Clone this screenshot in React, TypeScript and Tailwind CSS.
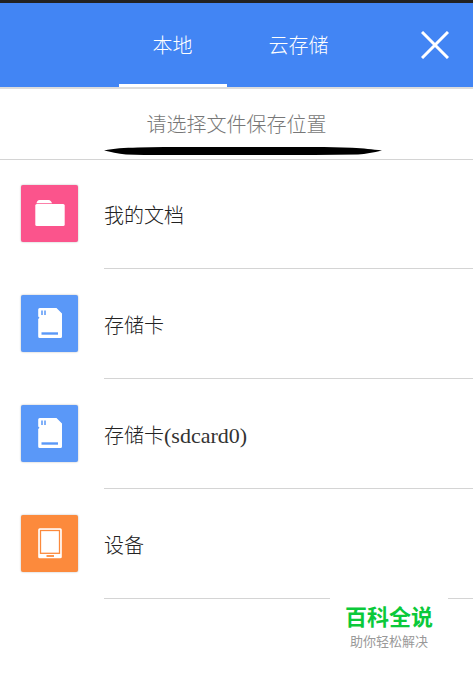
import { useState } from "react";
import type { ReactNode } from "react";

function FolderIcon() {
  return (
    <svg viewBox="0 0 57 57" className="size-full" fill="#fff" aria-hidden="true">
      <path d="M15.5 18.3c.3-2 1.3-3.3 3-3.3h9.200c1.300 0 2.800 1.500 3.300 3.300z" />
      <rect x="14.300" y="19" width="29.400" height="22" rx="1.500" />
    </svg>
  );
}

function CardIcon() {
  return (
    <svg viewBox="0 0 57 57" className="size-full" aria-hidden="true">
      <path
        fill="#fff"
        d="M18.700 13H35.500L41 18.500V41.500a1.500 1.500 0 0 1-1.500 1.500H18.700a1.500 1.500 0 0 1-1.500-1.500V24l1.300-1.300-1.300-1.300V14.500A1.500 1.500 0 0 1 18.700 13z"
      />
      <path d="M21 15.500V20M24 15.500V20" stroke="#5a98f8" strokeWidth="1.500" />
      <path d="M20.500 38.500H37" stroke="#5a98f8" strokeWidth="2.400" />
    </svg>
  );
}

function DeviceIcon() {
  return (
    <svg viewBox="0 0 57 57" className="size-full" aria-hidden="true">
      <rect x="17.200" y="13.200" width="23.600" height="30" rx="1.500" fill="#fff" />
      <rect x="19.500" y="15.500" width="19" height="22.800" fill="none" stroke="#fc8a3c" strokeWidth="1.300" />
      <path d="M25.500 41H33" stroke="#fc8a3c" strokeWidth="1.800" />
    </svg>
  );
}

type Place = { id: string; name: string; suffix?: string; tile: string; icon: ReactNode };

const places: Place[] = [
  { id: "docs", name: "我的文档", tile: "bg-[#fb548c]", icon: <FolderIcon /> },
  { id: "card", name: "存储卡", tile: "bg-[#5a98f8]", icon: <CardIcon /> },
  { id: "card0", name: "存储卡", suffix: "(sdcard0)", tile: "bg-[#5a98f8]", icon: <CardIcon /> },
  { id: "device", name: "设备", tile: "bg-[#fc8a3c]", icon: <DeviceIcon /> },
];

export default function App() {
  const [tab, setTab] = useState("local");
  return (
    <div className="flex min-h-screen flex-col bg-white font-['Liberation_Serif','Noto_Sans_CJK_SC',serif] text-xl font-light text-[#222]">
      <header className="relative flex h-[87px] justify-center border-t-3 border-[#222] bg-[#4285f4] pr-[2px] text-white">
        <nav className="flex">
          {[
            { id: "local", label: "本地" },
            { id: "cloud", label: "云存储" },
          ].map((t) => (
            <button
              key={t.id}
              type="button"
              onClick={() => setTab(t.id)}
              className={`mx-[9px] w-[108px] border-b-3 pt-1 ${tab === t.id ? "border-white" : "border-transparent"}`}
            >
              {t.label}
            </button>
          ))}
        </nav>
        <button type="button" aria-label="关闭" className="absolute inset-y-0 right-6 flex items-center">
          <svg viewBox="0 0 28 28" className="size-7" stroke="#fff" strokeWidth="3" aria-hidden="true">
            <path d="M1 1L27 27M27 1L1 27" />
          </svg>
        </button>
      </header>

      <main>
        <div className="flex h-[73px] flex-col items-center border-t-2 border-b border-t-[#dcdcdc] border-b-[#d4d4d4] pt-5">
          <h1 className="leading-8 text-[#777]">请选择文件保存位置</h1>
          <svg viewBox="0 0 278 8" className="mt-[6px] ml-3 h-2 w-[278px] shrink-0" aria-hidden="true">
            <path d="M0 3.500C10 1.500 20 1 34 .6L60 0H220L248 .8C260 1.400 268 2.500 278 3.500 269 5.500 262 7 254 7.600L210 8H40L22 7.600C14 6.800 6 4.800 0 3.500z" />
          </svg>
        </div>

        <ul className="-mt-px">
          {places.map((p) => (
            <li key={p.id}>
              <button type="button" className="flex h-[110px] w-full gap-[26px] pl-[21px] text-left">
                <span className={`mt-[26px] size-[57px] shrink-0 rounded-[2px] shadow-[0_0_2px_rgba(0,0,0,0.3)] ${p.tile}`}>
                  {p.icon}
                </span>
                <span className="flex h-full flex-1 items-center border-b border-[#d4d4d4] pt-1">
                  <span>
                    {p.name}
                    {p.suffix && <span className="text-[22px] leading-7 text-[#333]">{p.suffix}</span>}
                  </span>
                </span>
              </button>
            </li>
          ))}
        </ul>
      </main>

      <aside className="relative -mt-px mr-[25px] flex w-[118px] flex-col items-center self-end bg-white pt-px pb-2 font-['Noto_Sans_CJK_SC',sans-serif]">
        <strong className="text-[22px] leading-8 font-bold text-[#0bc93a]">百科全说</strong>
        <span className="text-[13px] leading-5 font-normal text-[#999]">助你轻松解决</span>
      </aside>
    </div>
  );
}
